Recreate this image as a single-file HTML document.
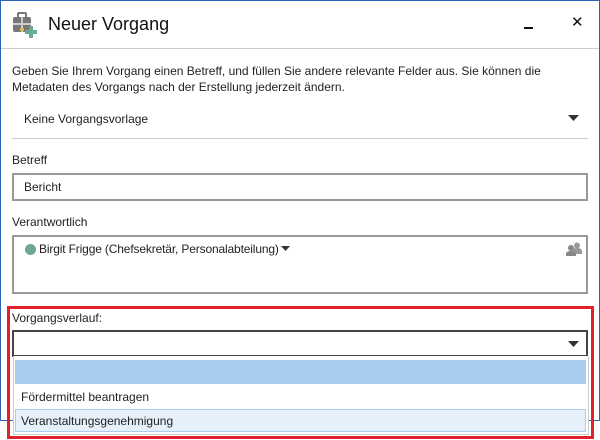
<!DOCTYPE html>
<html><head><meta charset="utf-8"><style>
*{margin:0;padding:0;box-sizing:border-box}
body{width:600px;height:440px;background:#fff;font-family:"Liberation Sans",sans-serif;font-size:12px;color:#222;position:relative;overflow:hidden}
.a{position:absolute}
.box{position:absolute;border:2px solid #999;background:#fff}
</style></head><body>
<div class="a" style="left:0;top:0;width:600px;height:421px;border:1px solid #2b63b8;border-bottom:1px solid #2b63b8"></div>
<svg class="a" style="left:12px;top:12px" width="26" height="26" viewBox="0 0 26 26">
<rect x="1" y="5" width="18" height="15" rx="2" fill="#777"/>
<rect x="6" y="1" width="8" height="5" rx="1" fill="none" stroke="#777" stroke-width="2"/>
<rect x="9" y="5" width="2" height="15" fill="#ccc"/>
<rect x="1" y="11" width="18" height="2" fill="#ccc"/>
<rect x="8" y="16" width="4" height="3" fill="#e8b24a"/>
<path d="M17 14h4v4h4v4h-4v4h-4v-4h-4v-4h4z" fill="#6aaa96"/>
</svg>
<div class="a" style="left:48px;top:14px;font-size:18px;color:#111">Neuer Vorgang</div>
<div class="a" style="left:524px;top:27px;width:9px;height:2px;background:#111"></div>
<div class="a" style="left:571px;top:13px;font-size:15px;color:#111">✕</div>
<div class="a" style="left:1px;top:48px;width:598px;height:1px;background:#ccc"></div>
<div class="a" style="left:12px;top:63px;line-height:16px;width:580px">Geben Sie Ihrem Vorgang einen Betreff, und füllen Sie andere relevante Felder aus. Sie können die Metadaten des Vorgangs nach der Erstellung jederzeit ändern.</div>
<div class="a" style="left:24px;top:112px">Keine Vorgangsvorlage</div>
<svg class="a" style="left:568px;top:115px" width="11" height="6"><path d="M0 0h11L5.5 6z" fill="#333"/></svg>
<div class="a" style="left:12px;top:138px;width:576px;height:1px;background:#ccc"></div>
<div class="a" style="left:12px;top:153px">Betreff</div>
<div class="box" style="left:12px;top:173px;width:576px;height:28px"></div>
<div class="a" style="left:24px;top:180px">Bericht</div>
<div class="a" style="left:12px;top:215px">Verantwortlich</div>
<div class="box" style="left:12px;top:235px;width:576px;height:59px"></div>
<div class="a" style="left:25px;top:244px;width:11px;height:11px;border-radius:50%;background:#6fa891"></div>
<div class="a" style="left:39px;top:242px;white-space:nowrap;letter-spacing:-0.15px">Birgit Frigge (Chefsekretär, Personalabteilung)<svg style="margin-left:2px;vertical-align:2px" width="9" height="5"><path d="M0 0h9L4.5 5z" fill="#333"/></svg></div>
<svg class="a" style="left:566px;top:242px" width="16" height="14" viewBox="0 0 16 14"><circle cx="11" cy="3.5" r="3" fill="#999"/><path d="M6 9c0-2 2-3 5-3s5 1 5 3v3H6z" fill="#999"/><circle cx="5" cy="6" r="3" fill="#888"/><path d="M0 12c0-2 2-3 5-3s5 1 5 3v2H0z" fill="#888"/></svg>
<div class="a" style="left:7px;top:306px;width:587px;height:133px;border:3px solid #e3202a"></div>
<div class="a" style="left:12px;top:311px">Vorgangsverlauf:</div>
<div class="a" style="left:12px;top:330px;width:576px;height:27px;border:2px solid #444;background:#fff"></div>
<svg class="a" style="left:568px;top:341px" width="11" height="6"><path d="M0 0h11L5.5 6z" fill="#333"/></svg>
<div class="a" style="left:13px;top:356px;width:576px;height:79px;border:1px solid #ccc;border-top:none;background:#fff"></div>
<div class="a" style="left:15px;top:360px;width:571px;height:24px;background:#a9cdee"></div>
<div class="a" style="left:21px;top:390px">Fördermittel beantragen</div>
<div class="a" style="left:15px;top:409px;width:571px;height:23px;background:#e5f0fb;border:1px solid #a9cdee"></div>
<div class="a" style="left:21px;top:414px">Veranstaltungsgenehmigung</div>
</body></html>
